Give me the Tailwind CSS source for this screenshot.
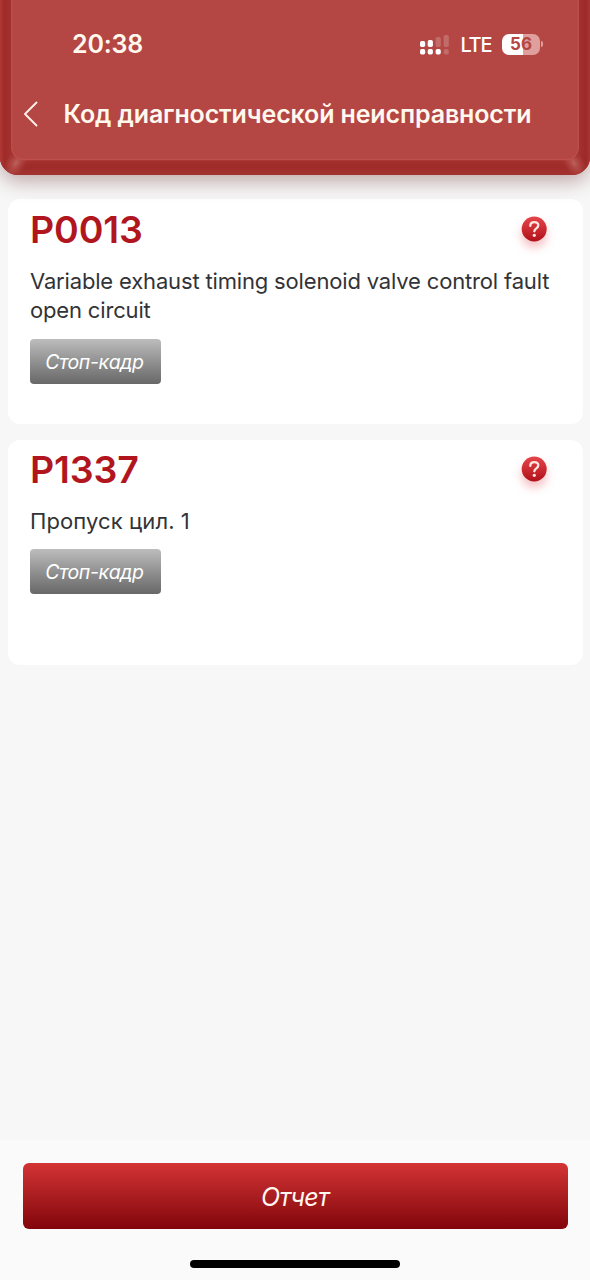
<!DOCTYPE html>
<html lang="ru">
<head>
<meta charset="utf-8">
<meta name="viewport" content="width=device-width, initial-scale=1">
<title>Код диагностической неисправности</title>
<script src="https://cdn.jsdelivr.net/npm/@tailwindcss/browser@4"></script>
</head>
<body class="bg-[#f7f7f7] font-['Inter','Noto_Sans',sans-serif]">
<div class="flex h-[1280px] w-[590px] flex-col overflow-hidden">
  <header class="relative h-[175px] shrink-0 overflow-visible rounded-b-[18px] shadow-[0_6px_20px_rgba(90,20,20,0.36)]">
    <svg class="absolute inset-0" width="590" height="175" viewBox="0 0 590 175" aria-hidden="true">
      <defs>
        <linearGradient id="gl" x1="0" x2="1" y1="0" y2="0"><stop offset="0" stop-color="#ae3936"/><stop offset="0.35" stop-color="#a02b29"/><stop offset="1" stop-color="#a33230"/></linearGradient>
        <linearGradient id="gr" x1="1" x2="0" y1="0" y2="0"><stop offset="0" stop-color="#a73533"/><stop offset="0.35" stop-color="#9d2a28"/><stop offset="1" stop-color="#a33230"/></linearGradient>
        <linearGradient id="gb" x1="0" x2="0" y1="0" y2="1"><stop offset="0" stop-color="#a53230"/><stop offset="0.5" stop-color="#9f2b28"/><stop offset="1" stop-color="#a13331"/></linearGradient>
        <radialGradient id="shine"><stop offset="0" stop-color="#c06a66" stop-opacity="0.85"/><stop offset="0.5" stop-color="#b85450" stop-opacity="0.5"/><stop offset="1" stop-color="#b04a47" stop-opacity="0"/></radialGradient>
        <clipPath id="hc"><path d="M0 0H590V157a18 18 0 0 1-18 18H18a18 18 0 0 1-18-18Z"/></clipPath>
      </defs>
      <g clip-path="url(#hc)">
        <rect width="590" height="175" fill="#a02c2a"/>
        <rect width="590" height="16" y="159" fill="url(#gb)"/>
        <path d="M0 0H12V160L0 168Z" fill="url(#gl)"/>
        <path d="M590 0H578V160L590 168Z" fill="url(#gr)"/>
        <ellipse cx="16" cy="163" rx="18" ry="10" transform="rotate(-58 16 163)" fill="url(#shine)"/>
        <ellipse cx="574" cy="163" rx="18" ry="10" transform="rotate(58 574 163)" fill="url(#shine)"/>
        <path d="M11.700-2H578.300V147.500a12 12 0 0 1-12 12H23.700a12 12 0 0 1-12-12Z" fill="#b44643" stroke="#be4f4b" stroke-width="1.300"/>
      </g>
    </svg>
    <div class="relative flex h-[88px] items-center justify-between pr-[47px] pl-[72px] text-[#fff8ee]">
      <time class="text-[25px] font-semibold leading-[30px] tracking-[-0.2px]">20:38</time>
      <div class="flex items-center text-white">
        <svg class="mt-[2px]" width="30" height="20" viewBox="0 0 30 20" aria-hidden="true">
          <g fill="#fff"><rect x="1" y="6" width="5.200" height="6" rx="1.700"/><rect x="8.700" y="5" width="5.200" height="7" rx="1.700"/><rect x="1" y="14" width="5.200" height="5.500" rx="1.700"/><rect x="8.700" y="14" width="5.200" height="5.500" rx="1.700"/><rect x="16.600" y="14" width="5.200" height="5.500" rx="1.700"/></g>
          <g fill="#fff" opacity="0.2"><rect x="16.600" y="2" width="5.200" height="10" rx="1.700"/><rect x="24.600" y="0" width="5.200" height="12" rx="1.700"/><rect x="24.600" y="14" width="5.200" height="5.500" rx="2"/></g>
        </svg>
        <span class="ml-[11.500px] w-[41.500px] pt-[2px] text-[20px] font-medium leading-6 tracking-[-1.3px]">LTE</span>
        <span class="flex h-[21px] w-[38px] items-center justify-center rounded-[7px] bg-linear-to-r from-white from-55% to-[#df9f9d] to-55% text-[17px] font-bold leading-none text-[#b44643]">56</span>
        <span class="ml-[1px] h-[6px] w-[2px] rounded-r-full bg-[#df9f9d]"></span>
      </div>
    </div>
    <div class="relative flex h-[52px] items-center pl-[23px] text-[#fff8ee]">
      <svg width="16" height="27" viewBox="0 0 16 27" fill="none" stroke="#fff1ea" stroke-width="1.900" stroke-linecap="round" stroke-linejoin="round" aria-hidden="true"><path d="M13.500 1.500 2 13l11.500 11.500"/></svg>
      <h1 class="ml-[24.500px] whitespace-nowrap text-[25px] font-semibold leading-[30px] tracking-[-0.13px]">Код диагностической неисправности</h1>
    </div>
  </header>

  <main class="mt-[24px] flex grow flex-col gap-[15.500px] px-[7.500px]">
    <article class="h-[225px] shrink-0 rounded-[12px] bg-white px-[22.500px] pt-[7px]">
      <div class="flex h-[46px] items-center justify-between pr-[13.500px]">
        <h2 class="pt-[2px] text-[37.500px] font-semibold leading-none tracking-[-0.15px] text-[#b1161e]">P0013</h2>
        <svg class="overflow-visible drop-shadow-[0_6px_5px_rgba(225,40,50,0.3)]" width="25" height="25" viewBox="0 0 25 25" aria-hidden="true">
          <defs><linearGradient id="q1" x1="0" x2="0" y1="0" y2="1"><stop offset="0" stop-color="#e5454a"/><stop offset="1" stop-color="#b01018"/></linearGradient></defs>
          <circle cx="12.200" cy="12" r="12.500" fill="url(#q1)"/>
          <path d="M8.300 8.900C8.300 6.400 9.900 5.100 12.300 5.100S16.300 6.500 16.300 8.600C16.300 11.400 12.400 11.400 12.400 14.300" fill="none" stroke="#ffe6de" stroke-width="2.300" stroke-linecap="round"/>
          <circle cx="12.300" cy="18.300" r="1.600" fill="#ffe6de"/>
        </svg>
      </div>
      <p class="mt-[14px] whitespace-nowrap text-[22px] leading-[29.500px] tracking-[-0.165px] text-[#323336]"><span class="relative top-[1px]">Variable exhaust timing solenoid valve control fault</span><br>open circuit</p>
      <button class="mt-[14px] flex h-[45px] w-[131px] items-center justify-center rounded-[4px] bg-linear-to-b from-[#bdbdbd] to-[#686868] pt-[2px] pr-[2px] text-[19.500px] italic leading-none tracking-[-0.4px] text-white">Стоп-кадр</button>
    </article>
    <article class="h-[225px] shrink-0 rounded-[12px] bg-white px-[22.500px] pt-[7px]">
      <div class="flex h-[46px] items-center justify-between pr-[13.500px]">
        <h2 class="text-[37.500px] font-semibold leading-none tracking-[-0.15px] text-[#b1161e]">P1337</h2>
        <svg class="overflow-visible drop-shadow-[0_6px_5px_rgba(225,40,50,0.3)]" width="25" height="25" viewBox="0 0 25 25" aria-hidden="true">
          <circle cx="12.200" cy="12" r="12.500" fill="url(#q1)"/>
          <path d="M8.300 8.900C8.300 6.400 9.900 5.100 12.300 5.100S16.300 6.500 16.300 8.600C16.300 11.400 12.400 11.400 12.400 14.300" fill="none" stroke="#ffe6de" stroke-width="2.300" stroke-linecap="round"/>
          <circle cx="12.300" cy="18.300" r="1.600" fill="#ffe6de"/>
        </svg>
      </div>
      <p class="mt-[14.500px] whitespace-nowrap text-[22px] leading-[29.500px] tracking-[0.1px] text-[#323336]">Пропуск цил. 1</p>
      <button class="mt-[12.500px] flex h-[45px] w-[131px] items-center justify-center rounded-[4px] bg-linear-to-b from-[#bdbdbd] to-[#686868] pt-[2px] pr-[2px] text-[19.500px] italic leading-none tracking-[-0.4px] text-white">Стоп-кадр</button>
    </article>
  </main>

  <footer class="flex h-[140px] shrink-0 flex-col items-center bg-[#fafafa] pt-[22.500px]">
    <button class="flex h-[66.500px] w-[545px] items-center justify-center rounded-[6px] bg-linear-to-b from-[#d43335] to-[#82040a] pt-[3px] text-[25px] italic leading-none tracking-[-0.7px] text-[#fff8ee]">Отчет</button>
    <div class="mt-[31px] h-[8px] w-[210px] rounded-full bg-black"></div>
  </footer>
</div>
</body>
</html>
